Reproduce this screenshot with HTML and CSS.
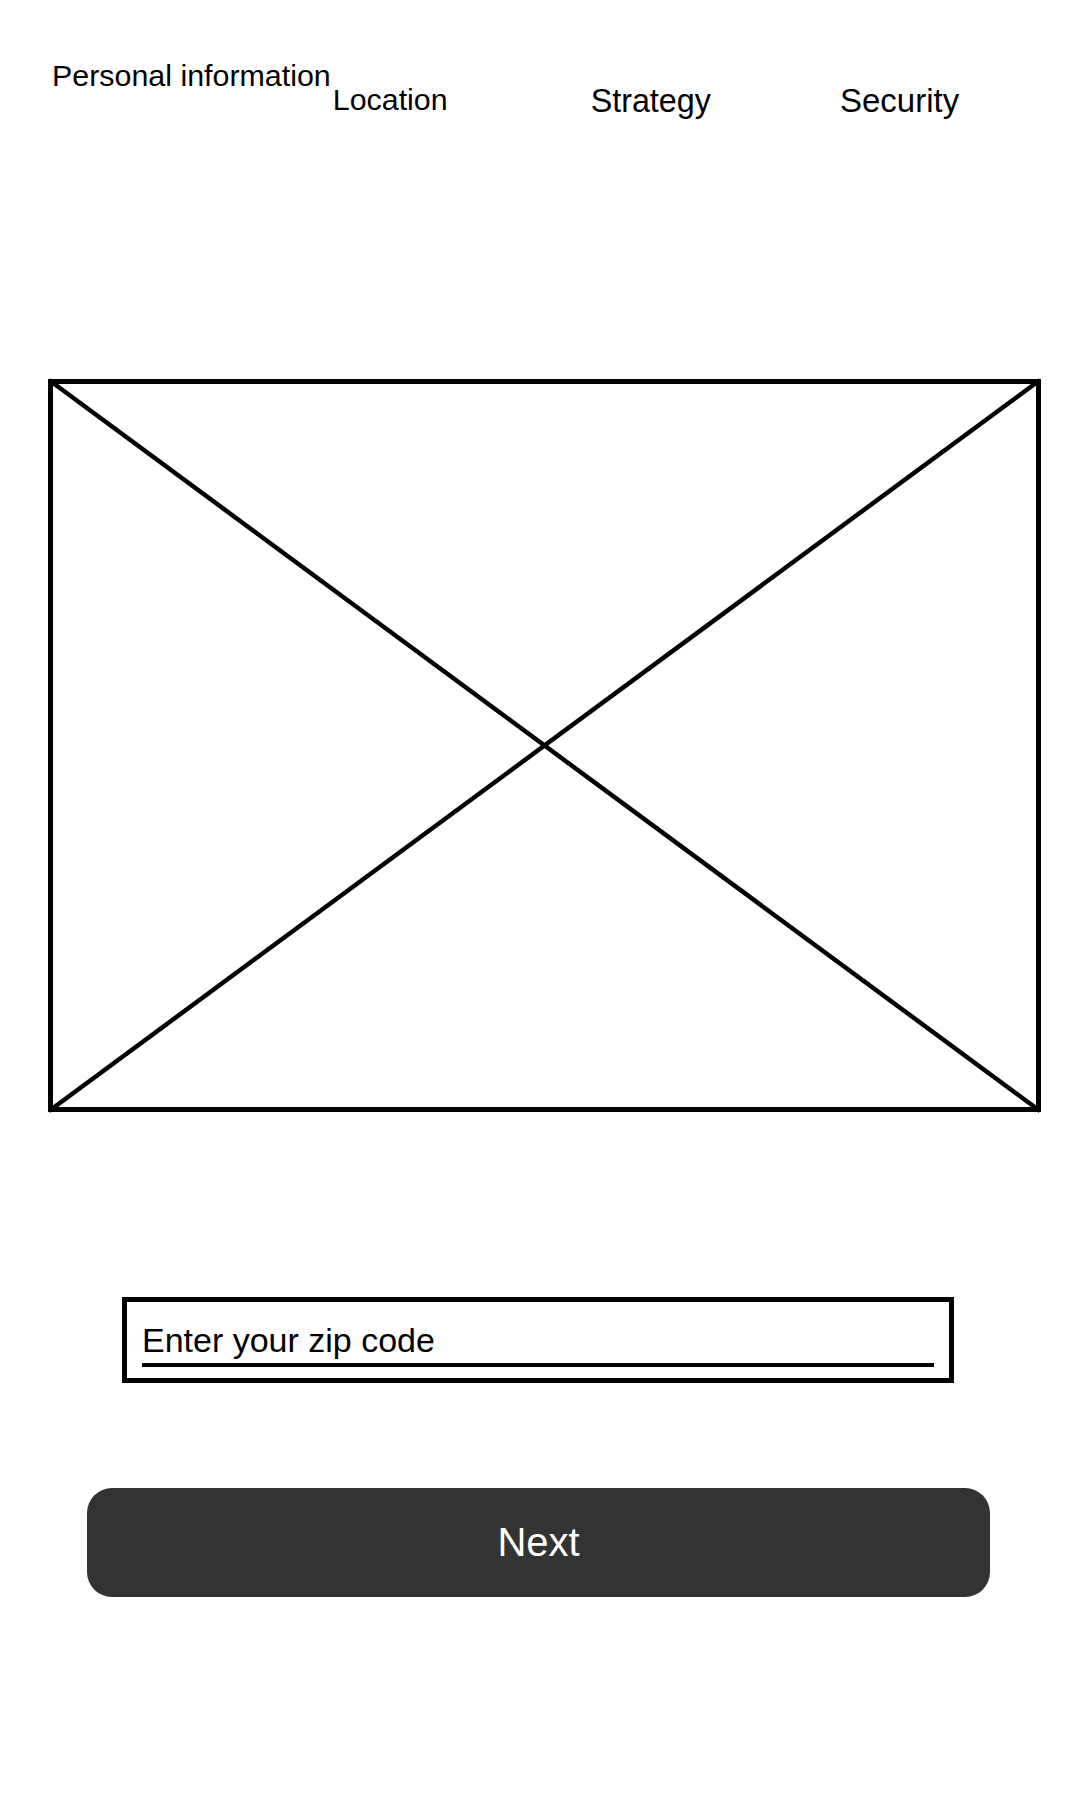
FILE: index.html
```html
<!DOCTYPE html>
<html lang="en">
<head>
<meta charset="utf-8">
<title>Location</title>
<link rel="stylesheet" href="styles.css">
</head>
<body>
  <nav class="steps">
    <span class="step step-personal">Personal information</span>
    <span class="step step-location">Location</span>
    <span class="step step-strategy">Strategy</span>
    <span class="step step-security">Security</span>
  </nav>

  <div class="placeholder">
    <svg class="placeholder-x" viewBox="0 0 983 723" preserveAspectRatio="none" aria-hidden="true">
      <line x1="-4" y1="-4" x2="987" y2="727"></line>
      <line x1="987" y1="-4" x2="-4" y2="727"></line>
    </svg>
  </div>

  <div class="zip-box">
    <div class="zip-field">Enter your zip code</div>
  </div>

  <button class="next-btn" type="button">Next</button>
</body>
</html>
```

FILE: styles.css
```css
html, body {
  margin: 0;
  padding: 0;
  background: #ffffff;
}

body {
  width: 1080px;
  font-family: "Liberation Sans", Arial, sans-serif;
  color: #000000;
}

.steps {
  display: flex;
  align-items: flex-start;
  padding-left: 52px;
  height: 117px;
}

.step {
  display: block;
  white-space: nowrap;
}

.step-personal {
  font-size: 30.4px;
  line-height: 30px;
  margin-top: 60px;
}

.step-location {
  font-size: 30.4px;
  line-height: 30px;
  margin-top: 84px;
  margin-left: 2px;
}

.step-strategy {
  font-size: 32.3px;
  line-height: 32px;
  margin-top: 85px;
  margin-left: 143px;
}

.step-security {
  font-size: 33px;
  line-height: 32px;
  margin-top: 85px;
  margin-left: 129px;
}

.placeholder {
  box-sizing: border-box;
  width: 993px;
  height: 733px;
  margin: 262px 0 0 48px;
  border: 5px solid #000000;
}

.placeholder-x {
  display: block;
  width: 100%;
  height: 100%;
  overflow: visible;
}

.placeholder-x line {
  stroke: #000000;
  stroke-width: 4.5;
  vector-effect: non-scaling-stroke;
}

.zip-box {
  box-sizing: border-box;
  width: 832px;
  height: 86px;
  margin: 185px 0 0 122px;
  border: 5px solid #000000;
  padding: 21px 15px 11px 15px;
}

.zip-field {
  font-size: 34px;
  line-height: 34px;
  padding-bottom: 6px;
  border-bottom: 4px solid #000000;
  white-space: nowrap;
}

.next-btn {
  display: block;
  box-sizing: border-box;
  width: 903px;
  height: 109px;
  margin: 105px 0 0 87px;
  padding: 0;
  border: none;
  border-radius: 25px;
  background: #333333;
  color: #ffffff;
  font-family: "Liberation Sans", Arial, sans-serif;
  font-size: 40px;
  line-height: 109px;
  text-align: center;
}
```
